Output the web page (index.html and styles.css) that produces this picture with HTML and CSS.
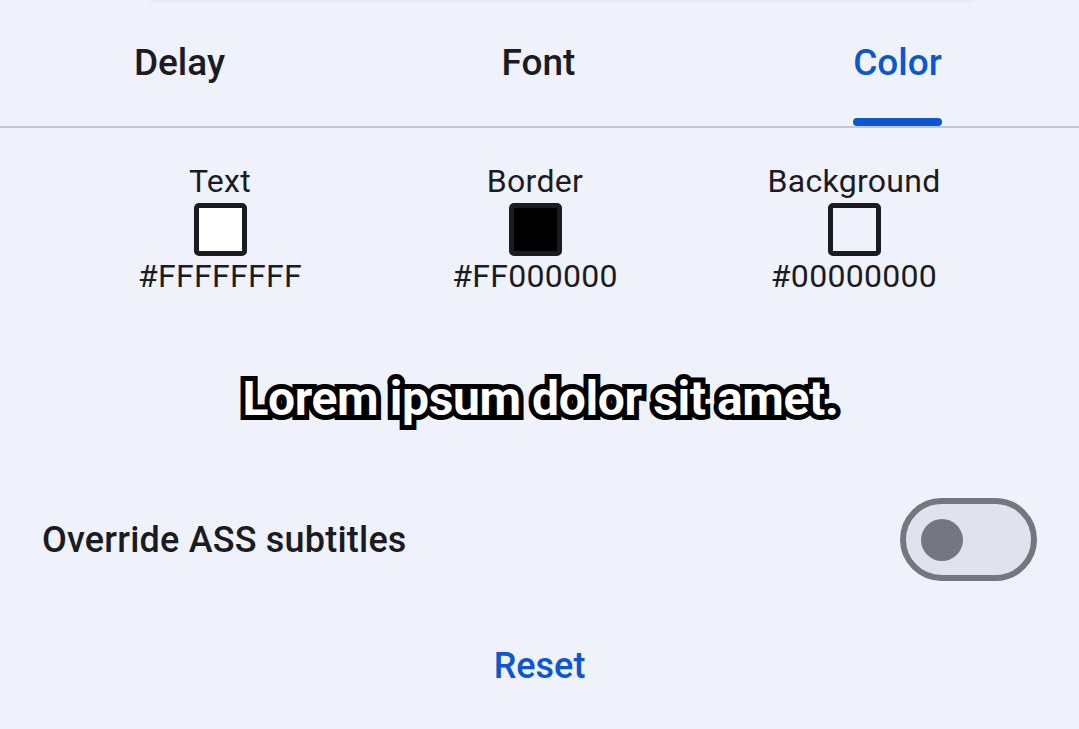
FILE: index.html
```html
<!DOCTYPE html>
<html>
<head>
<meta charset="utf-8">
<link rel="stylesheet" href="styles.css">
</head>
<body>
<div class="sheet">
  <div class="topline"></div>
  <div class="tabs">
    <div class="tab"><span class="tab-label">Delay</span></div>
    <div class="tab"><span class="tab-label">Font</span></div>
    <div class="tab active"><span class="tab-label">Color</span></div>
  </div>
  <div class="colors">
    <div class="color-col c1">
      <div class="clabel">Text</div>
      <div class="swatch white"></div>
      <div class="chex">#FFFFFFFF</div>
    </div>
    <div class="color-col c2">
      <div class="clabel">Border</div>
      <div class="swatch black"></div>
      <div class="chex">#FF000000</div>
    </div>
    <div class="color-col c3">
      <div class="clabel">Background</div>
      <div class="swatch clear"></div>
      <div class="chex">#00000000</div>
    </div>
  </div>
  <div class="preview"><span class="preview-text">Lorem ipsum dolor sit amet.</span></div>
  <div class="override">
    <div class="olabel">Override ASS subtitles</div>
    <div class="switch"><div class="thumb"></div></div>
  </div>
  <div class="reset">Reset</div>
</div>
</body>
</html>
```
FILE: styles.css
```css
html, body {
  margin: 0;
  padding: 0;
  background: #eff2fb;
}
body {
  font-family: Roboto, "Noto Sans", sans-serif;
  color: #1b1b21;
  width: 1079px;
  height: 729px;
  overflow: hidden;
}
.sheet {
  display: flex;
  flex-direction: column;
}
.topline {
  height: 2px;
  margin: 0 105px 0 150px;
  background: #e8ebf4;
}
.tabs {
  display: flex;
  box-sizing: border-box;
  height: 128px;
  margin-top: -2px;
  border-bottom: 2px solid #c4c6d0;
}
.tab {
  flex: 1;
  display: flex;
  justify-content: center;
  align-items: stretch;
  font-size: 37px;
  font-weight: 500;
}
.tab:nth-child(3) {
  padding-right: 2px;
}
.tab.active {
  color: #0b57d0;
}
.tab-label {
  position: relative;
  display: flex;
  align-items: center;
  padding-bottom: 2px;
}
.tab.active .tab-label::after {
  content: "";
  position: absolute;
  left: 0;
  right: 0;
  bottom: 0;
  height: 8px;
  border-radius: 4px;
  background: #0b57d0;
}
.colors {
  display: flex;
  padding-top: 35px;
}
.color-col {
  display: flex;
  flex-direction: column;
  align-items: center;
  width: 0;
  flex: none;
}
.c1 { margin-left: 220px; }
.c2 { margin-left: 315px; }
.c3 { margin-left: 319px; }
.clabel, .chex {
  font-size: 32px;
  white-space: nowrap;
  line-height: 36px;
  letter-spacing: 0.3px;
}
.swatch {
  width: 53px;
  height: 53px;
  box-sizing: border-box;
  border: 5px solid #1b1b21;
  border-radius: 5px;
  margin: 4px 0 2px;
  flex: none;
}
.swatch.white { background: #ffffff; }
.swatch.black { background: #000000; }
.swatch.clear { background: transparent; }
.preview {
  display: flex;
  justify-content: center;
  margin-top: 76px;
  height: 56px;
  align-items: center;
}
.preview-text {
  font-family: Roboto, sans-serif;
  font-weight: 700;
  font-size: 48px;
  color: #ffffff;
  letter-spacing: -0.4px;
  paint-order: stroke fill;
  -webkit-text-stroke: 10px #000;
  stroke-linejoin: round;
  padding-left: 2px;
}
.override {
  display: flex;
  align-items: center;
  justify-content: space-between;
  margin-top: 72px;
  padding: 0 42px 0 42px;
}
.olabel {
  font-size: 36px;
  font-weight: 500;
  letter-spacing: 0.2px;
}
.switch {
  width: 137px;
  height: 83px;
  box-sizing: border-box;
  border: 6px solid #74777f;
  border-radius: 42px;
  background: #e1e2ec;
  display: flex;
  align-items: center;
  padding-left: 15px;
}
.thumb {
  width: 42px;
  height: 42px;
  border-radius: 50%;
  background: #74777f;
}
.reset {
  display: flex;
  justify-content: center;
  margin-top: 64px;
  font-size: 36px;
  line-height: 42px;
  font-weight: 500;
  color: #0b57d0;
}
```
